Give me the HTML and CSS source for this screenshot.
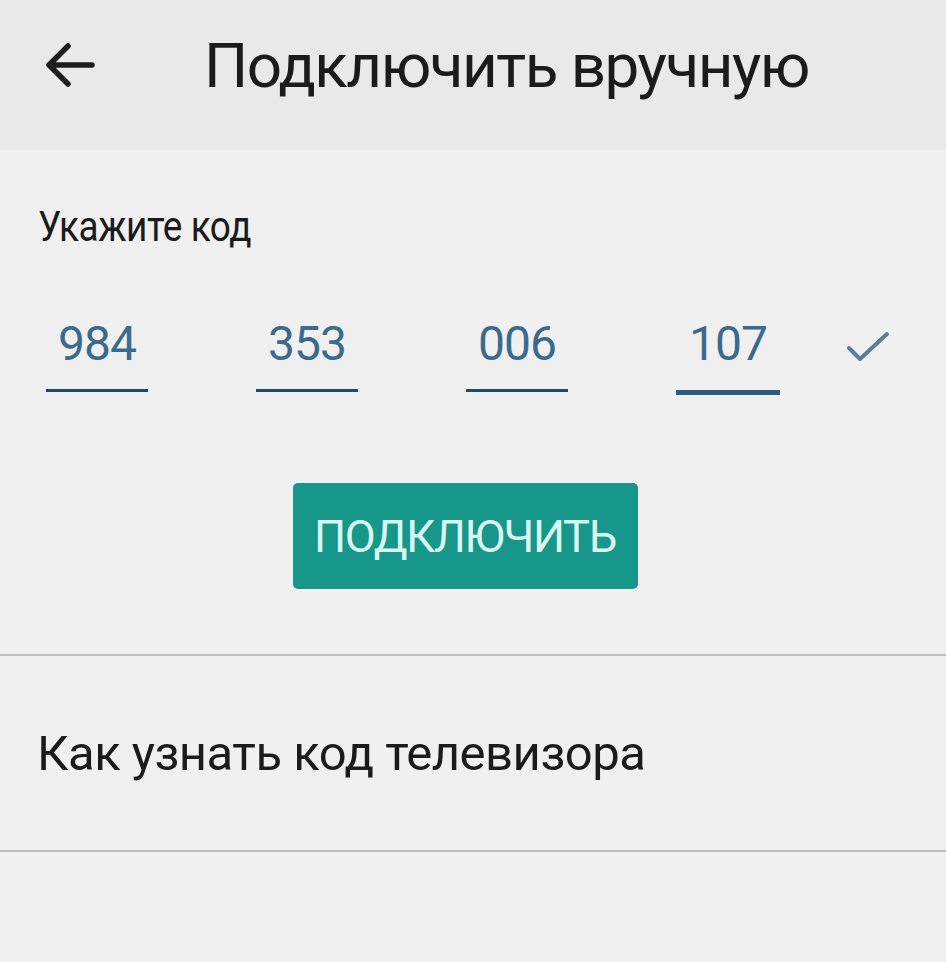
FILE: index.html
```html
<!DOCTYPE html>
<html lang="ru">
<head>
<meta charset="utf-8">
<title>Подключить вручную</title>
<link rel="stylesheet" href="styles.css">
</head>
<body>
<div class="screen">
  <header class="appbar">
    <span class="back">
      <svg width="52" height="50" viewBox="0 0 52 50"><path d="M48 25H6M24 6L5 25l19 19" fill="none" stroke="#1e1e1e" stroke-width="5.5" stroke-linecap="round" stroke-linejoin="round"/></svg>
    </span>
    <h1 class="title">Подключить вручную</h1>
  </header>
  <main class="content">
    <div class="label"><span class="label-text">Укажите код</span></div>
    <div class="code-row">
      <div class="field"><span class="digits">984</span></div>
      <div class="field"><span class="digits">353</span></div>
      <div class="field"><span class="digits">006</span></div>
      <div class="field focused"><span class="digits">107</span></div>
      <span class="check">
        <svg width="44" height="36" viewBox="0 0 44 36"><path d="M3 18l11 11L41 4" fill="none" stroke="#5b7d9c" stroke-width="4" stroke-linecap="round" stroke-linejoin="round"/></svg>
      </span>
    </div>
    <div class="btn-wrap"><button class="connect">ПОДКЛЮЧИТЬ</button></div>
  </main>
  <div class="list-item">Как узнать код телевизора</div>
</div>
</body>
</html>
```
FILE: styles.css
```css
html, body { margin: 0; padding: 0; }
body {
  background: #f0f0f0;
  font-family: Roboto, "Noto Sans", "Liberation Sans", sans-serif;
  width: 946px;
  height: 962px;
  overflow: hidden;
}
.screen { display: flex; flex-direction: column; }
.appbar {
  height: 150px;
  background: #e9e9e9;
  display: flex;
  align-items: center;
  box-sizing: border-box;
  padding-left: 44px;
  padding-bottom: 20px;
}
.back { display: flex; width: 52px; height: 50px; }
.title {
  margin: 0 0 0 108px;
  font-size: 62px;
  font-weight: 400;
  color: #1b1b1b;
  letter-spacing: -1.5px;
}
.label {
  margin: 52px 0 0 38px;
  font-size: 42px;
  color: #1b1b1b;
  line-height: 50px;
}
.label-text {
  display: inline-block;
  transform: scaleX(0.88);
  transform-origin: left center;
  letter-spacing: -0.5px;
}
.code-row {
  display: flex;
  align-items: flex-start;
  margin-top: 64px;
  padding-left: 46px;
}
.field {
  width: 102px;
  margin-right: 108px;
  border-bottom: 3px solid #1e4b60;
  height: 76px;
  box-sizing: border-box;
  display: flex;
  justify-content: center;
}
.field.focused { border-bottom: 5px solid #2a5e7a; height: 79px; width: 104px; margin-right: 66px; }
.digits {
  font-size: 48px;
  color: #3a6b8e;
  line-height: 56px;
  letter-spacing: -1px;
}
.check { display: flex; margin-top: 14px; }
.btn-wrap { display: flex; justify-content: center; margin-top: 88px; }
.connect {
  width: 345px;
  height: 106px;
  position: relative;
  left: -8px;
  background: #17968a;
  border: none;
  border-radius: 5px;
  color: #d9f6f2;
  font-family: Roboto, "Noto Sans", "Liberation Sans", sans-serif;
  font-size: 45px;
  letter-spacing: -1.3px;
  padding: 0;
}
.list-item {
  margin-top: 65px;
  border-top: 2px solid #bdbdbd;
  border-bottom: 2px solid #bdbdbd;
  height: 194px;
  display: flex;
  align-items: center;
  padding-left: 37px;
  font-size: 49px;
  color: #1b1b1b;
  letter-spacing: -0.5px;
}
```
